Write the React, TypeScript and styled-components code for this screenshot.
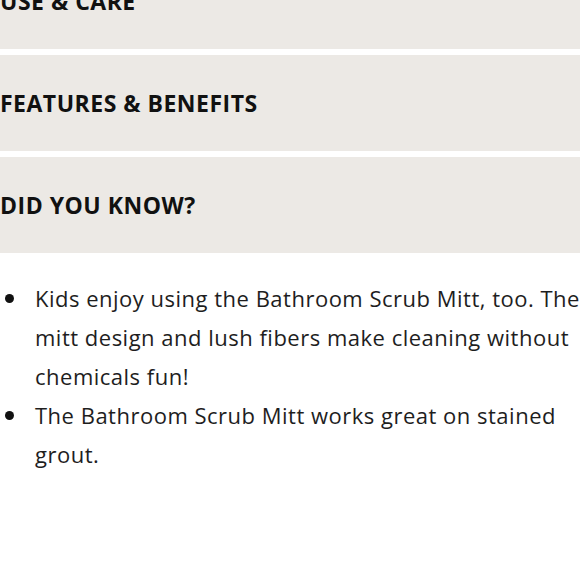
import React from "react";
import styled, { createGlobalStyle } from "styled-components";

const Global = createGlobalStyle`
  html, body { margin: 0; padding: 0; background: #ffffff; }
  body { font-family: "Open Sans", "Liberation Sans", sans-serif; color: #1a1a1a; overflow: hidden; }
`;

const Page = styled.div`
  width: 600px;
  margin-top: -47px;
  display: flex;
  flex-direction: column;
`;

const Panel = styled.div<{ $last?: boolean }>`
  height: 96px;
  background: #ece9e5;
  display: flex;
  align-items: center;
  margin-bottom: ${(p) => (p.$last ? "0" : "6px")};
`;

const Heading = styled.h3`
  margin: 0;
  font-family: "Open Sans", "Liberation Sans", sans-serif;
  font-weight: 700;
  font-size: 23px;
  letter-spacing: 0.5px;
  color: #111111;
  text-transform: uppercase;
`;

const List = styled.ul`
  list-style: none;
  margin: 26px 0 0 0;
  padding: 0;
  display: flex;
  flex-direction: column;
`;

const Item = styled.li`
  display: grid;
  grid-template-columns: 35px 1fr;
  font-size: 22px;
  letter-spacing: 0.5px;
  line-height: 39px;
  color: #1e1e1e;
`;

const Bullet = styled.span`
  display: flex;
  align-items: center;
  height: 39px;
  padding-left: 5px;
  &::after {
    content: "";
    width: 9px;
    height: 9px;
    border-radius: 50%;
    background: #111;
  }
`;

const items = [
  "Kids enjoy using the Bathroom Scrub Mitt, too. The mitt design and lush fibers make cleaning without chemicals fun!",
  "The Bathroom Scrub Mitt works great on stained grout.",
];

export default function App() {
  return (
    <>
      <Global />
      <Page>
        <Panel>
          <Heading>Use &amp; Care</Heading>
        </Panel>
        <Panel>
          <Heading>Features &amp; Benefits</Heading>
        </Panel>
        <Panel $last>
          <Heading>Did You Know?</Heading>
        </Panel>
        <List>
          {items.map((t) => (
            <Item key={t}>
              <Bullet />
              <span>{t}</span>
            </Item>
          ))}
        </List>
      </Page>
    </>
  );
}
